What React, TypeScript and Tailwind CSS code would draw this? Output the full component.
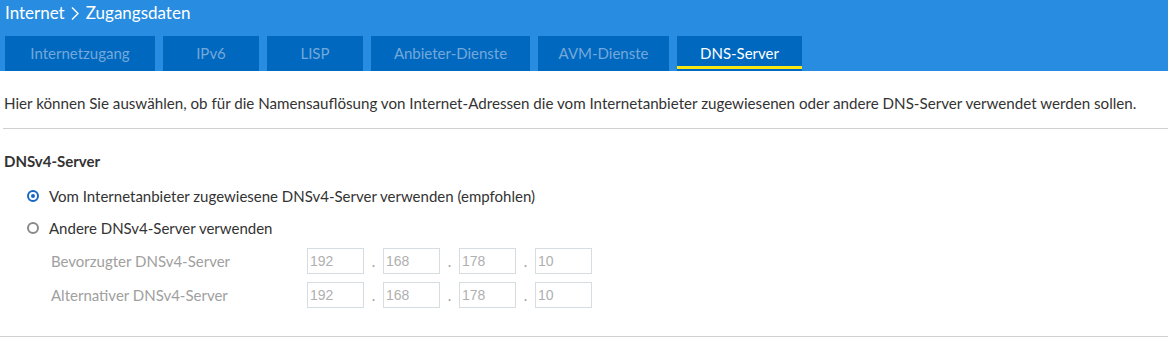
const tabs = [
  { label: "Internetzugang", w: "w-[150px]" },
  { label: "IPv6", w: "w-[96px]" },
  { label: "LISP", w: "w-[96px]" },
  { label: "Anbieter-Dienste", w: "w-[159px]" },
  { label: "AVM-Dienste", w: "w-[131px]" },
  { label: "DNS-Server", w: "w-[125px]", active: true },
];

function Radio({ checked }: { checked?: boolean }) {
  return (
    <span
      className={
        "w-[12px] h-[12px] rounded-full border-2 flex items-center justify-center " +
        (checked ? "border-[#1766c7]" : "border-[#8a8a8a]")
      }
    >
      {checked && <span className="w-[4px] h-[4px] rounded-full bg-[#1766c7]" />}
    </span>
  );
}

function IpRow({ label }: { label: string }) {
  const parts = ["192", "168", "178", "10"];
  return (
    <div className="flex items-center h-[34px]">
      <span className="w-[307px] pl-[51px] text-[#a0a0a0]">{label}</span>
      {parts.map((p, i) => (
        <div key={i} className="flex items-center">
          {i > 0 && <span className="w-[19px] text-center text-[#a0a0a0]">.</span>}
          <div className="w-[57px] h-[26px] border border-[#d6dde0] px-[2px] flex items-center text-[14px] text-[#b0b0b0] font-['Liberation_Sans',sans-serif]">
            {p}
          </div>
        </div>
      ))}
    </div>
  );
}

export default function App() {
  return (
    <div className="w-[1168px] h-[354px] bg-white text-[15px] text-[#333] font-['Lato',sans-serif]">
      <div className="bg-[#288de0] pt-[3px] px-[5px]">
        <div className="h-[33px] flex items-start text-white text-[17px] leading-[20px]">
          <span>Internet</span>
          <svg className="w-[14px] h-[20px] ml-[3px] mr-[4px]" viewBox="0 0 14 20" fill="none" stroke="white" strokeWidth={1.4}>
            <path d="M4 4.5 L10 10.5 L4 16.5" />
          </svg>
          <span>Zugangsdaten</span>
        </div>
        <div className="flex gap-[8px]">
          {tabs.map((t) => (
            <div
              key={t.label}
              className={
                t.w +
                " h-[35px] bg-[#0068bf] flex items-center justify-center relative " +
                (t.active ? "text-white" : "text-[#74a8da]")
              }
            >
              {t.label}
              {t.active && <span className="absolute left-0 right-0 bottom-[2px] h-[3px] bg-[#f9e611]" />}
            </div>
          ))}
        </div>
      </div>
      <p className="px-[4px] pt-[21px] h-[57px] text-[15.15px]">
        Hier können Sie auswählen, ob für die Namensauflösung von Internet-Adressen die vom Internetanbieter zugewiesenen oder andere DNS-Server verwendet werden sollen.
      </p>
      <div className="ml-[3px] border-t border-[#d0d0d0]" />
      <div className="px-[4px] pt-[21px] h-[51px] font-bold">DNSv4-Server</div>
      <div className="flex items-center gap-[10px] pl-[27px] h-[32px]">
        <Radio checked />
        <span>Vom Internetanbieter zugewiesene DNSv4-Server verwenden (empfohlen)</span>
      </div>
      <div className="flex items-center gap-[10px] pl-[27px] h-[32px]">
        <Radio />
        <span>Andere DNSv4-Server verwenden</span>
      </div>
      <IpRow label="Bevorzugter DNSv4-Server" />
      <IpRow label="Alternativer DNSv4-Server" />
      <div className="mt-[24px] border-t border-[#d0d0d0]" />
    </div>
  );
}
